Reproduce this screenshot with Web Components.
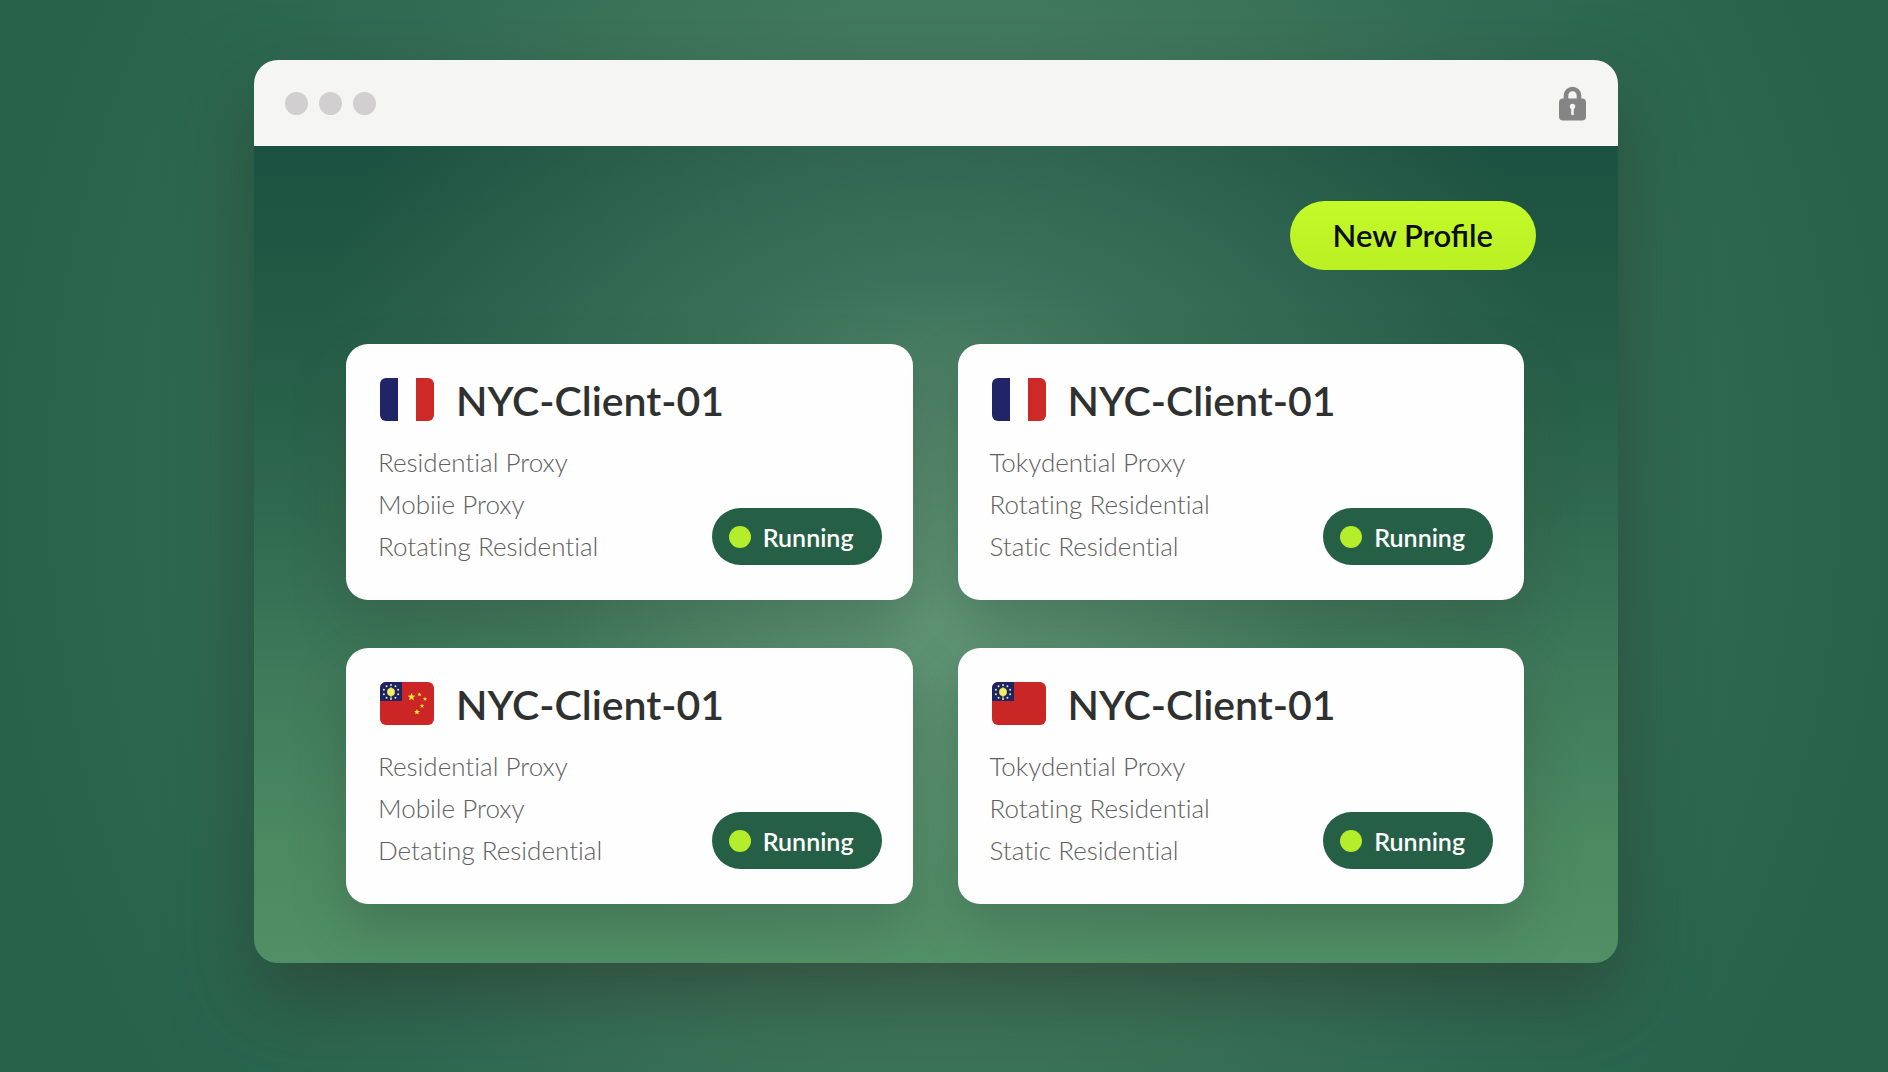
<!DOCTYPE html>
<html lang="en">
<head>
<meta charset="utf-8">
<title>Proxy profiles</title>
<style>
  html, body { margin: 0; min-height: 100%; }
  body {
    box-sizing: border-box;
    min-height: 100vh;
    font-family: Lato, "Open Sans", sans-serif;
    background:
      radial-gradient(ellipse 50% 100% at 50% 45%, #548c6e 0%, #437b5f 40%, #306b52 72%, #27624b 100%);
  }
</style>
</head>
<body>
<profile-app></profile-app>

<template id="t-app">
  <style>
    :host { display: block; padding: 60px 270px 60px 254px; }
    .actions { display: flex; justify-content: flex-end; padding-right: 82px; }
    .grid { display: grid; grid-template-columns: 1fr 1fr; gap: 48px 45px; padding: 74px 94px 59px 92px; }
    @media (max-width: 1500px) { :host { padding: 40px 24px; } .grid { grid-template-columns: 1fr; } }
  </style>
  <browser-window>
    <div class="actions"><pill-button>New Profile</pill-button></div>
    <div class="grid">
      <profile-card flag="fr" name="NYC-Client-01"><li>Residential Proxy</li><li>Mobiie Proxy</li><li>Rotating Residential</li></profile-card>
      <profile-card flag="fr" name="NYC-Client-01"><li>Tokydential Proxy</li><li>Rotating Residential</li><li>Static Residential</li></profile-card>
      <profile-card flag="cn" name="NYC-Client-01"><li>Residential Proxy</li><li>Mobile Proxy</li><li>Detating Residential</li></profile-card>
      <profile-card flag="tw" name="NYC-Client-01"><li>Tokydential Proxy</li><li>Rotating Residential</li><li>Static Residential</li></profile-card>
    </div>
  </browser-window>
</template>

<template id="t-window">
  <style>
    :host { display: block; border-radius: 24px; box-shadow: 0 36px 80px rgba(40, 52, 42, .54); }
    header {
      box-sizing: border-box; height: 86px; padding: 0 32px 0 31px;
      display: flex; align-items: center; justify-content: space-between;
      background: #f5f5f4; border-radius: 24px 24px 0 0;
    }
    .dots { display: flex; gap: 11px; }
    .dots i { width: 23px; height: 23px; border-radius: 50%; background: #d1cfd0; }
    svg { display: block; }
    main {
      padding-top: 55px; border-radius: 0 0 24px 24px;
      background:
        radial-gradient(ellipse 28% 42% at 50% 58%, rgba(118, 170, 136, .52) 0%, rgba(112, 164, 130, 0) 100%),
        radial-gradient(ellipse 46% 74% at 50% 34%, rgba(112, 160, 132, .44) 0%, rgba(106, 154, 126, .26) 50%, rgba(100, 150, 120, 0) 100%),
        linear-gradient(#1b5140 0%, #235b46 22%, #2f694f 45%, #3f7a5b 65%, #4b8961 85%, #519067 100%);
    }
  </style>
  <header>
    <div class="dots" aria-hidden="true"><i></i><i></i><i></i></div>
    <svg width="27" height="35" viewBox="0 0 27 35" role="img" aria-label="Secure">
      <path d="M7 14V9.500a6.500 6.500 0 0 1 13 0V14" fill="none" stroke="#858585" stroke-width="4.600"/>
      <rect x="0" y="12.500" width="27" height="22" rx="4" fill="#858585"/>
      <circle cx="13.500" cy="20.500" r="2.700" fill="#f5f5f4"/>
      <path d="M13.500 21v7" stroke="#f5f5f4" stroke-width="2.600" stroke-linecap="round"/>
    </svg>
  </header>
  <main><slot></slot></main>
</template>

<template id="t-button">
  <style>
    :host { display: block; }
    button {
      display: block; height: 69px; padding: 0 43px 2px; border: 0; border-radius: 35px;
      background: linear-gradient(#c3fa28, #bbf024); color: #0a0d08;
      font: 600 31px/40px Lato, sans-serif; cursor: pointer;
    }
  </style>
  <button type="button"><slot></slot></button>
</template>

<template id="t-card">
  <style>
    :host {
      display: block; box-sizing: border-box; padding: 34px 31px 33px 32px;
      background: #fefefe; border-radius: 22px;
      box-shadow: 0 24px 52px rgba(48, 70, 52, .32);
    }
    .head { display: flex; align-items: flex-start; gap: 22px; padding-left: 2px; margin-bottom: 16px; }
    h2 { margin: 0; padding: 1px 0 2px; font-size: 41px; line-height: 44px; font-weight: 600; color: #2f3131; }
    .row { display: flex; align-items: flex-end; justify-content: space-between; }
    ul {
      margin: 0; padding: 0; list-style: none; font-size: 26px; line-height: 42px;
      font-weight: 300; color: #606060; font-variant-ligatures: none;
    }
    status-badge { margin-bottom: 2px; }
  </style>
  <div class="head"><flag-icon></flag-icon><h2></h2></div>
  <div class="row"><ul><slot></slot></ul><status-badge>Running</status-badge></div>
</template>

<template id="t-badge">
  <style>
    :host {
      display: flex; align-items: center; gap: 12px; height: 57px; padding: 0 28px 0 17px;
      box-sizing: border-box; border-radius: 29px; background: #255f46; color: #fff;
      font-size: 25px; line-height: 32px; font-weight: 600; white-space: nowrap;
    }
    i { width: 22px; height: 22px; border-radius: 50%; background: #b3ed2b; }
  </style>
  <i aria-hidden="true"></i><span><slot></slot></span>
</template>

<script>
  const base = (id) => class extends HTMLElement {
    constructor() {
      super();
      this.attachShadow({ mode: 'open' }).appendChild(document.getElementById(id).content.cloneNode(true));
    }
  };

  const star = (cx, cy, r) => {
    let p = '';
    for (let k = 0; k < 10; k++) {
      const a = Math.PI * (k / 5 - 0.5), q = k % 2 ? r * 0.45 : r;
      p += (k ? 'L' : 'M') + (cx + q * Math.cos(a)).toFixed(2) + ' ' + (cy + q * Math.sin(a)).toFixed(2);
    }
    return `<path d="${p}Z" fill="#f8ea3c"/>`;
  };
  const canton = () => {
    let s = '<path d="M0 0h22v19H0z" fill="#1d2465"/>';
    for (let k = 0; k < 10; k++) {
      const a = Math.PI * (k + 0.5) / 5;
      s += `<circle cx="${(11 + 7.5 * Math.cos(a)).toFixed(2)}" cy="${(10 + 7 * Math.sin(a)).toFixed(2)}" r="1" fill="#e6ea9a"/>`;
    }
    return s + '<circle cx="11" cy="10" r="3.9" fill="#f4ee62"/><path d="M11 5v11" stroke="#f4ee62" stroke-width="1"/>';
  };
  const FLAGS = {
    fr: ['France', '<path d="M0 0h18v43H0z" fill="#1f2566"/><path d="M18 0h18v43H18z" fill="#fff"/><path d="M36 0h18v43H36z" fill="#cd2928"/>'],
    tw: ['Taiwan', '<path d="M0 0h54v43H0z" fill="#c92626"/>' + canton()],
    cn: ['China', '<path d="M0 0h54v43H0z" fill="#cb2525"/>' + canton() +
      star(31.5, 15, 4) + star(39.5, 12.5, 2.3) + star(45, 17, 2.3) + star(42, 24, 2.4) + star(37, 30, 3)]
  };

  customElements.define('flag-icon', class extends HTMLElement {
    static observedAttributes = ['code'];
    constructor() { super(); this.attachShadow({ mode: 'open' }); }
    attributeChangedCallback(_, __, code) {
      const [label, art] = FLAGS[code];
      this.shadowRoot.innerHTML = `<style>:host{display:block;flex:none;border-radius:6px;overflow:hidden}svg{display:block}</style>
        <svg width="54" height="43" viewBox="0 0 54 43" role="img" aria-label="${label}">${art}</svg>`;
    }
  });
  customElements.define('status-badge', base('t-badge'));
  customElements.define('pill-button', base('t-button'));
  customElements.define('profile-card', class extends base('t-card') {
    connectedCallback() {
      this.shadowRoot.querySelector('h2').textContent = this.getAttribute('name');
      this.shadowRoot.querySelector('flag-icon').setAttribute('code', this.getAttribute('flag'));
    }
  });
  customElements.define('browser-window', base('t-window'));
  customElements.define('profile-app', base('t-app'));
</script>
</body>
</html>
